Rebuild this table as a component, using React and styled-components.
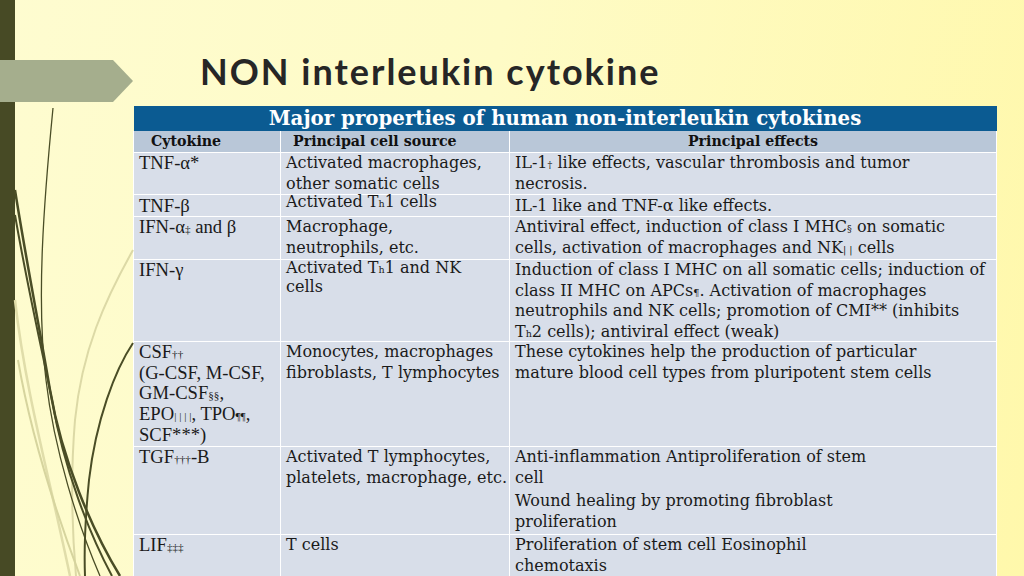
import React from "react";
import styled, { createGlobalStyle } from "styled-components";

const Global = createGlobalStyle`
  html, body {
    margin: 0;
    padding: 0;
  }
  body {
    width: 1024px;
    height: 576px;
    overflow: hidden;
  }
`;

const Slide = styled.div`
  position: relative;
  display: flex;
  width: 1024px;
  height: 576px;
  overflow: hidden;
  background: linear-gradient(100deg, #fefcd0 0%, #fefbc6 45%, #fff8ab 100%);
`;

const Bar = styled.div`
  flex: 0 0 15px;
  background: #474a25;
`;

const Content = styled.div`
  display: flex;
  flex-direction: column;
  padding-left: 118px;
`;

const Title = styled.h1`
  margin: 53px 0 0 67px;
  height: 36px;
  font-family: Lato, "DejaVu Sans", sans-serif;
  font-weight: 700;
  font-size: 36px;
  line-height: 36px;
  letter-spacing: 2px;
  color: #262626;
  white-space: nowrap;
`;

const Decor = styled.svg`
  position: absolute;
  left: 0;
  top: 0;
  width: 140px;
  height: 576px;
  pointer-events: none;
`;

const Table = styled.table`
  margin-top: 17px;
  width: 863px;
  border-collapse: collapse;
  table-layout: fixed;
`;

const Caption = styled.th`
  height: 25px;
  padding: 0;
  background: #0b5b92;
  color: #ffffff;
  font-family: "DejaVu Serif", "Liberation Serif", serif;
  font-weight: 700;
  font-size: 19.8px;
  line-height: 25px;
  text-align: center;
  white-space: nowrap;
`;

const HeadCell = styled.th`
  height: 21px;
  padding: 0 0 0 ${(p) => p.$pad || 0}px;
  background: #b9c7d8;
  border: 1.5px solid #ffffff;
  border-top: none;
  color: #111;
  font-family: "DejaVu Serif", "Liberation Serif", serif;
  font-weight: 700;
  font-size: 14.2px;
  line-height: 21px;
  text-align: ${(p) => (p.$center ? "center" : "left")};
  white-space: nowrap;
`;

const Row = styled.tr`
  height: ${(p) => p.$h}px;
`;

const Cell = styled.td`
  padding: ${(p) => p.$top ?? 0}px 0 0 5px;
  vertical-align: top;
  background: #d8dee9;
  border: 1.5px solid #ffffff;
  color: #1a1a1a;
  font-family: ${(p) =>
    p.$times
      ? '"Liberation Serif", "DejaVu Serif", serif'
      : '"DejaVu Serif", "Liberation Serif", serif'};
  font-size: ${(p) => (p.$times ? 18.6 : 16)}px;
  line-height: 20.7px;
  overflow: visible;
`;

const Line = styled.span`
  display: block;
  height: 20.7px;
  line-height: 20.7px;
  white-space: nowrap;
  margin-top: ${(p) => p.$gap || 0}px;
  transform: translateY(${(p) => p.$shift || 0}px);

  &:last-child {
    margin-bottom: -4px;
  }
`;

const Mark = styled.span`
  font-size: 0.6em;
  line-height: 0;
`;

export default function App() {
  return (
    <>
      <Global />
      <Slide>
        <Bar />
        <Content>
          <Title>NON interleukin cytokine</Title>
          <Table>
            <colgroup>
              <col style={{ width: 147 }} />
              <col style={{ width: 229 }} />
              <col style={{ width: 487 }} />
            </colgroup>
            <thead>
              <tr>
                <Caption colSpan={3}>
                  Major properties of human non-interleukin cytokines
                </Caption>
              </tr>
              <tr>
                <HeadCell $pad={17}>Cytokine</HeadCell>
                <HeadCell $pad={12}>Principal cell source</HeadCell>
                <HeadCell $center>Principal effects</HeadCell>
              </tr>
            </thead>
            <tbody>
              <Row $h={42}>
                <Cell $times>
                  <Line>TNF-α*</Line>
                </Cell>
                <Cell>
                  <Line>Activated macrophages,</Line>
                  <Line>other somatic cells</Line>
                </Cell>
                <Cell>
                  <Line>
                    IL-1<Mark>†</Mark> like effects, vascular thrombosis and tumor
                  </Line>
                  <Line>necrosis.</Line>
                </Cell>
              </Row>
              <Row $h={22}>
                <Cell $times $top={1}>
                  <Line>TNF-β</Line>
                </Cell>
                <Cell>
                  <Line $shift={-3}>
                    Activated T<Mark>h</Mark>1 cells
                  </Line>
                </Cell>
                <Cell $top={1}>
                  <Line>IL-1 like and TNF-α like effects.</Line>
                </Cell>
              </Row>
              <Row $h={43}>
                <Cell $times>
                  <Line>
                    IFN-α<Mark>‡</Mark> and β
                  </Line>
                </Cell>
                <Cell>
                  <Line>Macrophage,</Line>
                  <Line>neutrophils, etc.</Line>
                </Cell>
                <Cell>
                  <Line>
                    Antiviral effect, induction of class I MHC<Mark>§</Mark> on somatic
                  </Line>
                  <Line>
                    cells, activation of macrophages and NK<Mark>| |</Mark> cells
                  </Line>
                </Cell>
              </Row>
              <Row $h={82}>
                <Cell $times>
                  <Line>IFN-γ</Line>
                </Cell>
                <Cell>
                  <Line $shift={-2}>
                    Activated T<Mark>h</Mark>1 and NK
                  </Line>
                  <Line $shift={-4}>cells</Line>
                </Cell>
                <Cell>
                  <Line>Induction of class I MHC on all somatic cells; induction of</Line>
                  <Line>
                    class II MHC on APCs<Mark>¶</Mark>. Activation of macrophages
                  </Line>
                  <Line>neutrophils and NK cells; promotion of CMI** (inhibits</Line>
                  <Line>
                    T<Mark>h</Mark>2 cells); antiviral effect (weak)
                  </Line>
                </Cell>
              </Row>
              <Row $h={105}>
                <Cell $times>
                  <Line>
                    CSF<Mark>††</Mark>
                  </Line>
                  <Line>(G-CSF, M-CSF,</Line>
                  <Line>
                    GM-CSF<Mark>§§</Mark>,
                  </Line>
                  <Line>
                    EPO<Mark>| | | |</Mark>, TPO<Mark>¶¶</Mark>,
                  </Line>
                  <Line>SCF***)</Line>
                </Cell>
                <Cell>
                  <Line>Monocytes, macrophages</Line>
                  <Line>fibroblasts, T lymphocytes</Line>
                </Cell>
                <Cell>
                  <Line>These cytokines help the production of particular</Line>
                  <Line>mature blood cell types from pluripotent stem cells</Line>
                </Cell>
              </Row>
              <Row $h={88}>
                <Cell $times>
                  <Line>
                    TGF<Mark>†††</Mark>-B
                  </Line>
                </Cell>
                <Cell>
                  <Line>Activated T lymphocytes,</Line>
                  <Line>platelets, macrophage, etc.</Line>
                </Cell>
                <Cell>
                  <Line>Anti-inflammation Antiproliferation of stem</Line>
                  <Line>cell</Line>
                  <Line $gap={3}>Wound healing by promoting fibroblast</Line>
                  <Line>proliferation</Line>
                </Cell>
              </Row>
              <Row $h={50}>
                <Cell $times>
                  <Line>
                    LIF<Mark>‡‡‡</Mark>
                  </Line>
                </Cell>
                <Cell>
                  <Line>T cells</Line>
                </Cell>
                <Cell>
                  <Line>Proliferation of stem cell Eosinophil</Line>
                  <Line>chemotaxis</Line>
                </Cell>
              </Row>
            </tbody>
          </Table>
        </Content>
        <Decor viewBox="0 0 140 576">
          <polygon points="0,60 113,60 133,81 113,102 0,102" fill="#a5ae8d" />
          <path d="M133,250 C105,300 82,350 75,420 C70,480 72,530 76,576" fill="none" stroke="#dcd9a6" strokeWidth="2" />
          <path d="M15,300 C25,390 50,480 70,576" fill="none" stroke="#e0ddaa" strokeWidth="2.5" />
          <path d="M18,360 C30,430 55,510 80,576" fill="none" stroke="#d6d49e" strokeWidth="2" />
          <path d="M53,108 C44,200 36,300 46,380 C54,450 78,525 100,576" fill="none" stroke="#4a4d26" strokeWidth="1.3" />
          <path d="M15,190 C26,260 40,330 50,390 C62,460 92,530 120,576" fill="none" stroke="#4a4d26" strokeWidth="2.5" />
          <path d="M15,215 C28,290 42,350 52,400 C64,470 90,535 112,576" fill="none" stroke="#4a4d26" strokeWidth="2" />
          <path d="M133,343 C115,370 96,420 89,480 C85,520 84,550 85,576" fill="none" stroke="#4a4d26" strokeWidth="2" />
        </Decor>
      </Slide>
    </>
  );
}
